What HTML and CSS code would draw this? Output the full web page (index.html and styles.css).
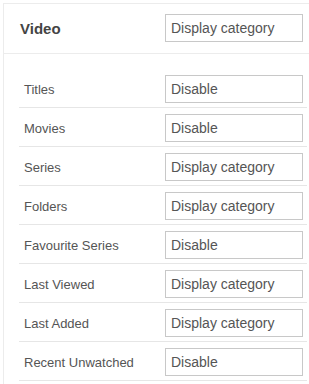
FILE: index.html
```html
<!DOCTYPE html>
<html>
<head>
<meta charset="utf-8">
<link rel="stylesheet" href="styles.css">
</head>
<body>
<div class="panel">
  <div class="panel-head">
    <span class="title">Video</span>
    <div class="field">Display category</div>
  </div>
  <div class="panel-body">
    <div class="row"><span class="label">Titles</span><div class="field">Disable</div></div>
    <div class="row"><span class="label">Movies</span><div class="field">Disable</div></div>
    <div class="row"><span class="label">Series</span><div class="field">Display category</div></div>
    <div class="row"><span class="label">Folders</span><div class="field">Display category</div></div>
    <div class="row"><span class="label">Favourite Series</span><div class="field">Disable</div></div>
    <div class="row"><span class="label">Last Viewed</span><div class="field">Display category</div></div>
    <div class="row"><span class="label">Last Added</span><div class="field">Display category</div></div>
    <div class="row"><span class="label">Recent Unwatched</span><div class="field">Disable</div></div>
  </div>
</div>
</body>
</html>
```
FILE: styles.css
```css
html, body {
  margin: 0;
  padding: 0;
  background: #fff;
  height: 100%;
  overflow: hidden;
}
body {
  box-sizing: border-box;
  padding: 3px 0 0 3px;
  font-family: "Liberation Sans", Arial, sans-serif;
  color: #555;
}
.panel {
  box-sizing: border-box;
  height: 100%;
  border-left: 1px solid #ececec;
  border-top: 1px solid #ececec;
}
.panel-head {
  display: flex;
  align-items: center;
  justify-content: space-between;
  padding: 10px 6px 11px 16px;
  border-bottom: 1px solid #ececec;
}
.title {
  font-size: 15px;
  font-weight: bold;
  color: #444;
}
.field {
  box-sizing: border-box;
  width: 138px;
  height: 28px;
  border: 1px solid #c8c8c8;
  padding: 0 5px;
  font-size: 14px;
  line-height: 26px;
  color: #555;
  white-space: nowrap;
}
.panel-body {
  padding-top: 15px;
  margin: 0 2px 0 15px;
}
.row {
  display: flex;
  align-items: center;
  justify-content: space-between;
  padding: 6px 4px 4px 5px;
  border-bottom: 1px solid #e6e6e6;
}
.label {
  font-size: 13px;
  color: #555;
}
```
